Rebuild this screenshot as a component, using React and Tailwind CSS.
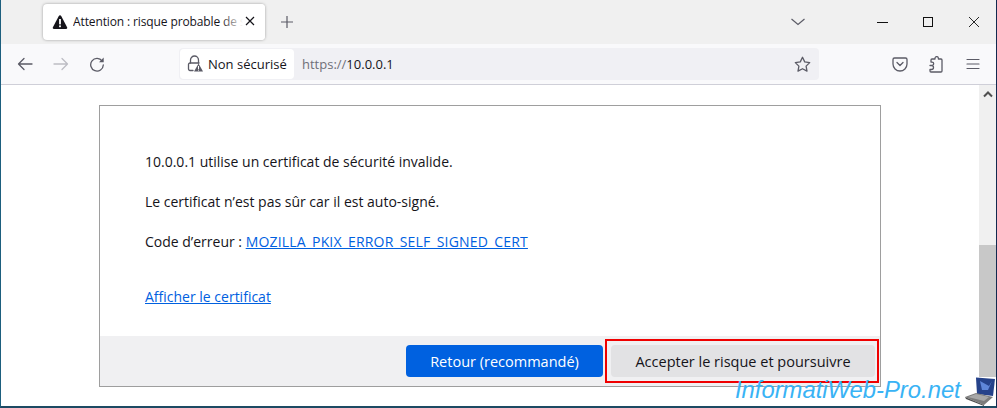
import React from "react";

const Tri = ({ s = 16, fill = "#15141a" }) => (
  <svg width={s} height={s} viewBox="0 0 16 16" className="shrink-0">
    <path d="M8 1.2c.5 0 .9.3 1.2.8l5.9 11.3c.4.8-.1 1.7-1 1.7H1.9c-.9 0-1.4-.9-1-1.7L6.8 2c.3-.5.7-.8 1.2-.8z" fill={fill} />
    <rect x="7.1" y="5" width="1.8" height="5.4" fill="#fff" />
    <rect x="7.1" y="11.4" width="1.8" height="1.8" fill="#fff" />
  </svg>
);

const stroke = { fill: "none", stroke: "#5b5b66", strokeWidth: 1.3, strokeLinecap: "round", strokeLinejoin: "round" };

function TabStrip() {
  return (
    <div className="h-[44px] shrink-0 bg-[#f0f0f0] flex items-center relative">
      <div className="ml-[42px] w-[222px] h-[36px] bg-white rounded-[4px] shadow-[0_0_3px_rgba(0,0,0,0.35)] flex items-center pl-[9px] relative overflow-hidden">
        <Tri />
        <span className="ml-[5px] text-[12px] tracking-[-0.12px] text-[#15141a] whitespace-nowrap overflow-hidden w-[180px]">Attention : risque probable de sécurité</span>
        <div className="absolute right-0 top-0 h-full w-[44px] bg-gradient-to-r from-transparent via-white to-white" />
        <svg width="12" height="12" viewBox="0 0 12 12" className="absolute left-[201px] top-[11px]">
          <path d="M2 2l8 8M10 2l-8 8" fill="none" stroke="#15141a" strokeWidth="1.2" />
        </svg>
      </div>
      <svg width="14" height="14" viewBox="0 0 14 14" className="ml-[15px]">
        <path d="M7 1v12M1 7h12" fill="none" stroke="#5b5b66" strokeWidth="1.2" />
      </svg>
      <div className="flex-1" />
      <svg width="16" height="10" viewBox="0 0 16 10" className="mr-[71px] mb-[1px]">
        <path d="M1.5 2l6.5 5.5L14.5 2" fill="none" stroke="#5b5b66" strokeWidth="1.2" />
      </svg>
      <svg width="11" height="3" viewBox="0 0 11 3" className="mr-[35px]">
        <path d="M0 1.5h11" stroke="#111" strokeWidth="1" />
      </svg>
      <svg width="10" height="10" viewBox="0 0 10 10" className="mr-[36px]">
        <rect x="0.5" y="0.5" width="9" height="9" fill="none" stroke="#111" strokeWidth="1" />
      </svg>
      <svg width="10" height="10" viewBox="0 0 10 10" className="mr-[17px]">
        <path d="M0 0l10 10M10 0L0 10" stroke="#111" strokeWidth="0.9" />
      </svg>
    </div>
  );
}

function Toolbar() {
  return (
    <div className="h-[41px] shrink-0 bg-[#f9f9fb] border-b border-[#cfcfd8] flex items-center">
      <svg width="16" height="16" viewBox="0 0 16 16" className="ml-[16px]">
        <path d="M15 8H1.5M7 2.5L1.5 8 7 13.5" {...stroke} />
      </svg>
      <svg width="16" height="16" viewBox="0 0 16 16" className="ml-[20px]">
        <path d="M1 8h13.5M9 2.5L14.5 8 9 13.5" {...stroke} stroke="#bdbdc4" />
      </svg>
      <svg width="16" height="16" viewBox="0 0 16 16" className="ml-[20px]">
        <path d="M13.2 5.2A6.3 6.3 0 1 0 14.3 9" {...stroke} />
        <path d="M14.7 1.5v4.7H10z" fill="#5b5b66" />
      </svg>
      <div className="ml-[74px] w-[640px] h-[32px] bg-[#f0f0f4] rounded-[4px] flex items-center relative">
        <div className="ml-[1px] w-[114px] h-[30px] bg-white rounded-[4px] flex items-center pl-[7px]">
          <svg width="16" height="18" viewBox="0 0 16 18" className="shrink-0">
            <path d="M3.5 8V5a4 4 0 0 1 8 0v3" {...stroke} />
            <path d="M6 15.5H3A1.5 1.5 0 0 1 1.5 14V9.5A1.5 1.5 0 0 1 3 8h9" {...stroke} />
            <path d="M11.5 8.5L16 16.5H7z" fill="#5b5b66" />
            <rect x="11" y="11" width="1" height="3" fill="#fff" />
            <rect x="11" y="14.6" width="1" height="1" fill="#fff" />
          </svg>
          <span className="ml-[5px] pt-[1px] text-[13px] text-[#15141a] whitespace-nowrap">Non sécurisé</span>
        </div>
        <span className="ml-[8px] pt-[1px] text-[13px] whitespace-nowrap text-[#15141a]">
          <span className="text-[#6f6f78]">https://</span>10.0.0.1
        </span>
        <div className="flex-1" />
        <svg width="17" height="17" viewBox="0 0 17 17" className="mr-[8px]">
          <path d="M8.5 1.3l2.2 4.6 5 .7-3.6 3.5.9 5-4.5-2.4-4.5 2.4.9-5L1.3 6.6l5-.7z" {...stroke} />
        </svg>
      </div>
      <svg width="16" height="16" viewBox="0 0 16 16" className="ml-[73px]">
        <path d="M2.5 2h11A1.5 1.5 0 0 1 15 3.5V8a7 7 0 0 1-14 0V3.5A1.5 1.5 0 0 1 2.5 2z" {...stroke} />
        <path d="M5 6.5L8 9.5l3-3" {...stroke} />
      </svg>
      <svg width="17" height="17" viewBox="0 0 17 17" className="ml-[20px]">
        <path d="M2 9.5h2a1.7 1.7 0 0 0 0-3.4H3V4a1 1 0 0 1 1-1h3V2.3a1.7 1.7 0 0 1 3.4 0V3H13a1 1 0 0 1 1 1v11a1 1 0 0 1-1 1H3a1 1 0 0 1-1-1v-1.5h1.5a1.7 1.7 0 0 0 0-4" {...stroke} />
      </svg>
      <svg width="14" height="12" viewBox="0 0 14 12" className="ml-[21px]">
        <path d="M1 1.5h12M1 6h12M1 10.5h12" fill="none" stroke="#5b5b66" strokeWidth="1.2" strokeLinecap="round" />
      </svg>
    </div>
  );
}

function Card() {
  return (
    <div className="w-[782px] h-[282px] border border-[#9e9e9e] flex flex-col text-[14px] text-[#15141a]">
      <div className="flex-1 pl-[45px] pt-[45px]">
        <p className="h-[21px] leading-[21px]">10.0.0.1 utilise un certificat de sécurité invalide.</p>
        <p className="h-[21px] leading-[21px] mt-[19px]">Le certificat n’est pas sûr car il est auto-signé.</p>
        <p className="h-[21px] leading-[21px] mt-[19px]">
          Code d’erreur : <a className="text-[#0060df] underline tracking-[0.17px]">MOZILLA_PKIX_ERROR_SELF_SIGNED_CERT</a>
        </p>
        <p className="h-[21px] leading-[21px] mt-[34px]">
          <a className="text-[#0060df] underline">Afficher le certificat</a>
        </p>
      </div>
      <div className="h-[50px] shrink-0 bg-[#f0f0f2] flex items-start justify-end pt-[9px] pr-[5px] gap-[8px]">
        <button className="w-[197px] h-[32px] pt-[1px] rounded-[4px] bg-[#0061e0] text-white font-medium text-[14.5px]">Retour (recommandé)</button>
        <button className="w-[264px] h-[32px] pt-[1px] rounded-[4px] bg-[#e2e2e4] text-[#15141a] font-medium text-[14.5px]">Accepter le risque et poursuivre</button>
      </div>
    </div>
  );
}

function Scrollbar() {
  return (
    <div className="w-[17px] shrink-0 flex flex-col bg-white">
      <div className="h-[160px] bg-[#f0f0f0] flex justify-center pt-[6px]">
        <svg width="10" height="7" viewBox="0 0 10 7">
          <path d="M1 5.5L5 1.5l4 4" fill="none" stroke="#505050" strokeWidth="2" />
        </svg>
      </div>
      <div className="h-[132px] bg-[#c8c8c8]" />
    </div>
  );
}

export default function App() {
  return (
    <div
      className="w-[997px] h-[408px] relative overflow-hidden flex flex-col bg-white border-l border-l-[#1d5f7e] border-r border-r-[#12294f] border-b-2 border-b-[#1d4a63]"
      style={{ fontFamily: '"Open Sans", "Noto Sans", sans-serif' }}
    >
      <TabStrip />
      <Toolbar />
      <div className="flex-1 flex min-h-0">
        <main className="flex-1 pl-[98px] pt-[20px]">
          <Card />
        </main>
        <Scrollbar />
      </div>
      <div className="absolute left-[604px] top-[339px] w-[274px] h-[44px] border-2 border-[#f00000]" />
      <div
        className="absolute left-[734px] top-[375px] text-[23.8px] leading-[30px] italic text-[#39b3f5] whitespace-nowrap"
        style={{ fontFamily: '"Liberation Sans", sans-serif' }}
      >
        InformatiWeb-Pro.net
      </div>
      <svg width="32" height="30" viewBox="0 0 32 30" className="absolute left-[964px] top-[376px]">
        <path d="M11 1.5l19 1.5-2 17-16-2z" fill="#26428a" />
        <path d="M15 5l9 5 3-5-4 9-6 0z" fill="#5f86d8" />
        <path d="M0 21l11-4 17 4-9 8z" fill="#7c7c7c" />
        <path d="M3 21l8-3 13 3-5 4z" fill="#a8a8a8" />
        <path d="M0 21l19 8v1L1 23z" fill="#4e4e4e" />
      </svg>
    </div>
  );
}
